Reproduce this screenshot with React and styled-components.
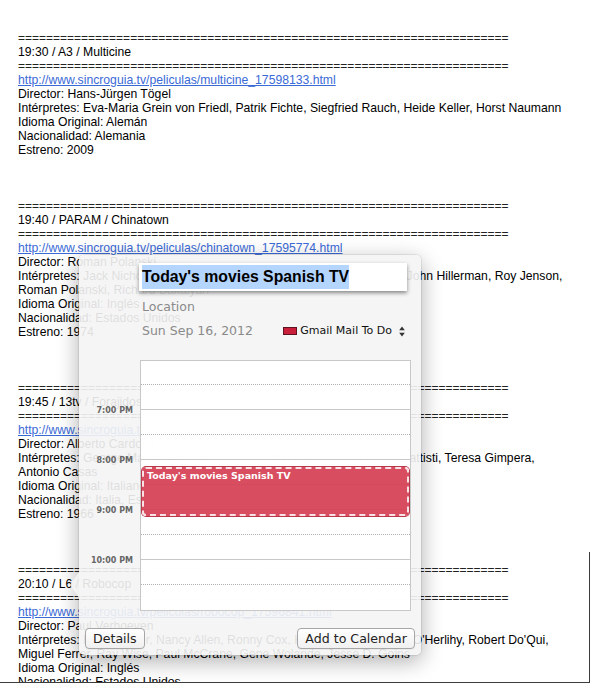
import styled, { createGlobalStyle } from 'styled-components';

const GlobalStyle = createGlobalStyle`
  html, body {
    margin: 0;
    padding: 0;
    background: #fff;
  }
  body {
    font-family: "Liberation Sans", Arial, sans-serif;
  }
`;

const SEP = '='.repeat(70);
const BASE = 'http://www.sincroguia.tv/peliculas/';

const listings = [
  {
    title: '19:30 / A3 / Multicine',
    url: BASE + 'multicine_17598133.html',
    lines: [
      'Director: Hans-Jürgen Tögel',
      'Intérpretes: Eva-Maria Grein von Friedl, Patrik Fichte, Siegfried Rauch, Heide Keller, Horst Naumann',
      'Idioma Original: Alemán',
      'Nacionalidad: Alemania',
      'Estreno: 2009',
    ],
  },
  {
    title: '19:40 / PARAM / Chinatown',
    url: BASE + 'chinatown_17595774.html',
    lines: [
      'Director: Roman Polanski',
      'Intérpretes: Jack Nicholson, Faye Dunaway, John Huston, Perry Lopez, John Hillerman, Roy Jenson,',
      'Roman Polanski, Richard Bakalyan',
      'Idioma Original: Inglés',
      'Nacionalidad: Estados Unidos',
      'Estreno: 1974',
    ],
  },
  {
    title: '19:45 / 13tv / Forajidos',
    url: BASE + 'forajidos_17596120.html',
    lines: [
      'Director: Alberto Cardone',
      'Intérpretes: George Martin, Fernando Sancho, Raf Baldassarre, Bruno Battisti, Teresa Gimpera,',
      'Antonio Casas',
      'Idioma Original: Italiano',
      'Nacionalidad: Italia, España',
      'Estreno: 1966',
    ],
  },
  {
    title: '20:10 / L6 / Robocop',
    url: BASE + 'robocop_17596841.html',
    lines: [
      'Director: Paul Verhoeven',
      "Intérpretes: Peter Weller, Nancy Allen, Ronny Cox, Kurtwood Smith, Dan O'Herlihy, Robert Do'Qui,",
      'Miguel Ferrer, Ray Wise, Paul McCrane, Gene Wolande, Jesse D. Goins',
      'Idioma Original: Inglés',
      'Nacionalidad: Estados Unidos',
      'Estreno: 1987',
    ],
  },
];

const hours = ['7:00 PM', '8:00 PM', '9:00 PM', '10:00 PM'];
const slots = Array.from({ length: 10 }, (_, i) => i);

function UpDownArrows() {
  return (
    <svg width="6" height="11" viewBox="0 0 6 11">
      <path d="M3 0.5 L5.8 4.2 L0.2 4.2 Z" fill="#333" />
      <path d="M3 10.5 L5.8 6.8 L0.2 6.8 Z" fill="#333" />
    </svg>
  );
}

export default function App() {
  return (
    <>
      <GlobalStyle />
      <Page>
        {listings.map((item) => (
          <Listing key={item.title}>
            <Separator>{SEP}</Separator>
            <Line>{item.title}</Line>
            <Separator>{SEP}</Separator>
            <Line><Link href="#">{item.url}</Link></Line>
            {item.lines.map((text) => (
              <Line key={text}>{text}</Line>
            ))}
          </Listing>
        ))}

        <Popover>
          <Header>
            <TitleField>
              <Selected>Today's movies Spanish TV</Selected>
            </TitleField>
            <Location>Location</Location>
            <DateRow>
              <DateText>Sun Sep 16, 2012</DateText>
              <CalendarPicker>
                <Swatch />
                <CalendarName>Gmail Mail To Do</CalendarName>
                <UpDownArrows />
              </CalendarPicker>
            </DateRow>
          </Header>

          <CalendarRow>
            <HourLabels>
              {hours.map((h) => (
                <HourLabel key={h}>{h}</HourLabel>
              ))}
            </HourLabels>
            <Grid>
              <Slots>
                {slots.map((i) => (
                  <Slot key={i} $half={i % 2 === 0} $last={i === slots.length - 1} />
                ))}
              </Slots>
              <Event>Today's movies Spanish TV</Event>
            </Grid>
          </CalendarRow>

          <Footer>
            <Button>Details</Button>
            <Button>Add to Calendar</Button>
          </Footer>
        </Popover>
      </Page>
    </>
  );
}

const Page = styled.div`
  position: relative;
  box-sizing: border-box;
  height: 683px;
  padding: 31px 0 0 18px;
  border-bottom: 1px solid #3c3c3c;
  overflow: hidden;
  font-size: 12.2px;
  line-height: 14px;
  color: #000;

  &::after {
    content: '';
    position: absolute;
    right: 0;
    top: 552px;
    bottom: 0;
    width: 1px;
    background: #3c3c3c;
  }
`;

const Listing = styled.div`
  margin-bottom: 42px;
`;

const Line = styled.div`
  white-space: nowrap;
  height: 14px;
`;

const Separator = styled(Line)`
  font-size: 12px;
  color: #222;
`;

const Link = styled.a`
  color: #3a6ad6;
  text-decoration: underline;
`;

const Popover = styled.div`
  position: absolute;
  left: 79px;
  top: 255px;
  width: 342px;
  height: 400px;
  box-sizing: border-box;
  padding: 8px 6px 6px 6px;
  display: flex;
  flex-direction: column;
  background: rgba(244, 244, 244, 0.91);
  border-radius: 5px;
  box-shadow: 0 0 0 1px rgba(0, 0, 0, 0.07), 0 6px 22px rgba(0, 0, 0, 0.33);
  font-family: "DejaVu Sans", "Liberation Sans", sans-serif;

  &::before {
    content: '';
    position: absolute;
    left: -9px;
    top: 317px;
    width: 0;
    height: 0;
    border-top: 13px solid transparent;
    border-bottom: 13px solid transparent;
    border-right: 9px solid rgba(244, 244, 244, 0.91);
  }
`;

const Header = styled.div`
  margin-left: 54px;
  display: flex;
  flex-direction: column;
`;

const TitleField = styled.div`
  width: 268px;
  height: 28px;
  box-sizing: border-box;
  padding: 0 3px;
  display: flex;
  align-items: center;
  background: #fff;
  box-shadow: 0 2px 4px rgba(0, 0, 0, 0.45);
`;

const Selected = styled.span`
  font-family: "Liberation Sans", Arial, sans-serif;
  font-weight: bold;
  font-size: 15.8px;
  line-height: 24px;
  color: #000;
  background: #b4d5fd;
  white-space: nowrap;
`;

const Location = styled.div`
  margin-top: 8px;
  padding-left: 3px;
  font-size: 12.5px;
  line-height: 16px;
  color: #8a8a8a;
`;

const DateRow = styled.div`
  margin-top: 8px;
  height: 16px;
  padding: 0 10px 0 3px;
  display: flex;
  align-items: center;
`;

const DateText = styled.span`
  font-size: 12.5px;
  line-height: 16px;
  color: #8a8a8a;
`;

const CalendarPicker = styled.div`
  margin-left: auto;
  display: flex;
  align-items: center;
  gap: 3px;

  svg {
    margin-left: 4px;
  }
`;

const Swatch = styled.span`
  width: 14px;
  height: 8px;
  box-sizing: border-box;
  background: #c91f3b;
  border: 1px solid #5e1420;
`;

const CalendarName = styled.span`
  font-size: 11px;
  line-height: 16px;
  color: #111;
`;

const CalendarRow = styled.div`
  margin-top: 21px;
  display: flex;
  gap: 7px;
`;

const HourLabels = styled.div`
  width: 48px;
  padding-top: 45px;
  display: flex;
  flex-direction: column;
`;

const HourLabel = styled.div`
  height: 50px;
  line-height: 12px;
  text-align: right;
  font-size: 8px;
  font-weight: bold;
  color: #666;
  white-space: nowrap;
`;

const Grid = styled.div`
  position: relative;
  width: 271px;
  box-sizing: border-box;
  border: 1px solid #c8c8c8;
  background: rgba(255, 255, 255, 0.95);
  overflow: hidden;
`;

const Slots = styled.div`
  margin-top: -1px;
`;

const Slot = styled.div`
  height: 25px;
  box-sizing: border-box;
  border-bottom: ${(p) =>
    p.$last ? 'none' : p.$half ? '1px dotted #b0b0b0' : '1px solid #c8c8c8'};
`;

const Event = styled.div`
  position: absolute;
  left: 1px;
  right: 1px;
  top: 106px;
  height: 49px;
  box-sizing: border-box;
  padding: 1px 3px;
  border: 2px dashed rgba(255, 255, 255, 0.85);
  border-radius: 4px;
  background: rgba(212, 58, 78, 0.9);
  box-shadow: 0 0 0 1px rgba(176, 36, 56, 0.9);
  color: #fff;
  font-size: 9.5px;
  font-weight: bold;
  line-height: 12px;
  white-space: nowrap;
`;

const Footer = styled.div`
  margin-top: auto;
  display: flex;
  justify-content: space-between;
`;

const Button = styled.button`
  height: 21px;
  padding: 0 7px;
  border: 1px solid #a6a6a6;
  border-radius: 4px;
  background: linear-gradient(#ffffff, #f0f0f0);
  box-shadow: 0 1px 0 rgba(0, 0, 0, 0.04);
  font-family: "DejaVu Sans", "Liberation Sans", sans-serif;
  font-size: 12.6px;
  line-height: 19px;
  color: #222;
`;
